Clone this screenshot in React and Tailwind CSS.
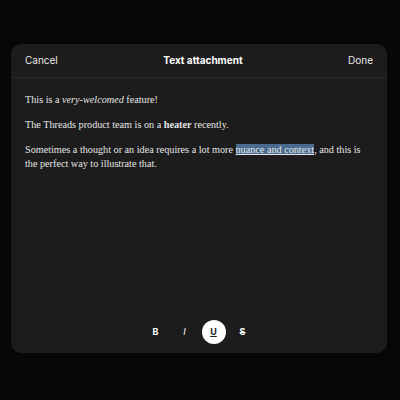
export default function App() {
  const sans = { fontFamily: 'Inter, "Liberation Sans", sans-serif' }
  const serif = { fontFamily: '"Liberation Serif", serif' }
  return (
    <div className="w-[400px] h-[400px] bg-[#070707] pt-[44px] px-[11px]" style={sans}>
      <div className="w-[376px] h-[309px] bg-[#1c1c1c] rounded-[10px] flex flex-col">
        <div className="h-[34px] flex items-center justify-between px-[14px] border-b border-[#2a2a2a] text-[10px] text-[#e8e8e8]">
          <span>Cancel</span>
          <span className="font-bold text-white">Text attachment</span>
          <span>Done</span>
        </div>
        <div className="flex-1 pl-[14px] pr-[24px] pt-[15px] text-[10.2px] leading-[13.5px] text-[#e6e6e6]" style={serif}>
          <p>This is a <em>very-welcomed</em> feature!</p>
          <p className="mt-[11.5px]">The Threads product team is on a <strong>heater</strong> recently.</p>
          <p className="mt-[11.5px]">
            Sometimes a thought or an idea requires a lot more{' '}
            <span className="bg-[#4b6a8f] underline">nuance and context</span>, and this is the perfect way to illustrate that.
          </p>
        </div>
        <div className="flex items-center justify-center gap-[5px] pb-[9px] text-[9px] font-bold text-white">
          <span className="w-[24px] h-[24px] flex items-center justify-center">B</span>
          <span className="w-[24px] h-[24px] flex items-center justify-center italic font-normal">I</span>
          <span className="w-[24px] h-[24px] rounded-full bg-white text-[#1c1c1c] flex items-center justify-center underline">U</span>
          <span className="w-[24px] h-[24px] flex items-center justify-center line-through">S</span>
        </div>
      </div>
    </div>
  )
}
